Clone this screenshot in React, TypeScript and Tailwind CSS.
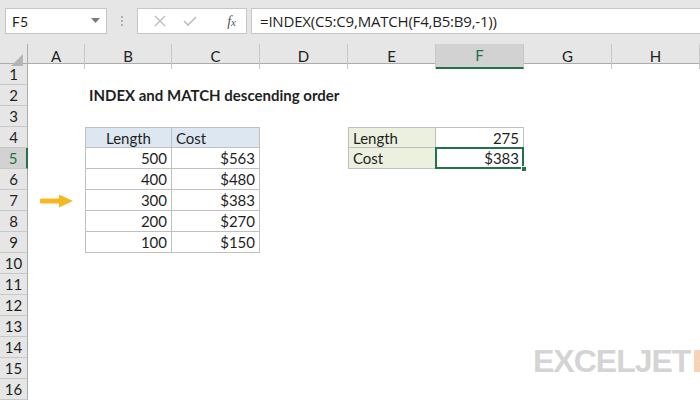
import React from 'react';

const COLS = ['A', 'B', 'C', 'D', 'E', 'F', 'G', 'H'];
const ROWS = Array.from({ length: 16 }, (_, i) => i + 1);

const tableData: [number, string][] = [
  [500, '$563'],
  [400, '$480'],
  [300, '$383'],
  [200, '$270'],
  [100, '$150'],
];

const grid = 'grid grid-cols-[28px_57px_87px_88px_88px_88px_88px_88px_88px]';

function Cell({ row, col }: { row: number; col: string }) {
  const base = 'h-[21px] text-[15px] leading-[20px] px-[4px] whitespace-nowrap overflow-visible relative';

  // Title
  if (row === 2 && col === 'B') {
    return <div className={`${base} font-bold`}>INDEX and MATCH descending order</div>;
  }
  // Arrow in A7
  if (row === 7 && col === 'A') {
    return (
      <div className={`${base} flex items-center`}>
        <svg width="34" height="14" viewBox="0 0 34 14" className="ml-[8px]">
          <path d="M2 7 H20" stroke="#f5b823" strokeWidth="5" strokeLinecap="round" />
          <path d="M19 0.5 L33 7 L19 13.5 Z" fill="#f5b823" />
        </svg>
      </div>
    );
  }
  // Main table B4:C9
  if (row >= 4 && row <= 9 && (col === 'B' || col === 'C')) {
    const left = col === 'B' ? 'border-l' : '';
    const top = row === 4 ? 'border-t' : '';
    const border = `border-[#c0c0c0] border-r border-b ${left} ${top}`;
    if (row === 4) {
      return (
        <div className={`${base} ${border} bg-[#dde7f2] ${col === 'B' ? 'text-center' : 'text-left'}`}>
          {col === 'B' ? 'Length' : 'Cost'}
        </div>
      );
    }
    const [len, cost] = tableData[row - 5];
    return <div className={`${base} ${border} text-right`}>{col === 'B' ? len : cost}</div>;
  }
  // Lookup table E4:F5
  if ((row === 4 || row === 5) && (col === 'E' || col === 'F')) {
    const left = col === 'E' ? 'border-l' : '';
    const top = row === 4 ? 'border-t' : '';
    const border = `border-[#c0c0c0] border-r border-b ${left} ${top}`;
    if (col === 'E') {
      return <div className={`${base} ${border} bg-[#ebf1de]`}>{row === 4 ? 'Length' : 'Cost'}</div>;
    }
    if (row === 4) {
      return <div className={`${base} ${border} text-right`}>275</div>;
    }
    return (
      <div className={`${base} ${border} text-right`}>
        <div className="absolute inset-[-1px] border-2 border-[#217346] pointer-events-none" />
        <div className="absolute right-[-4px] bottom-[-4px] w-[6px] h-[6px] bg-[#217346] border border-white" />
        $383
      </div>
    );
  }
  return <div className={base} />;
}

export default function App() {
  return (
    <div className="w-[700px] h-[400px] overflow-hidden bg-white text-[#1f1f1f] font-['Lato','Open_Sans',sans-serif]">
      {/* Formula bar */}
      <div className="h-[44px] bg-[#e6e6e6] flex items-start pt-[8px] pl-[5px]">
        <div className="w-[102px] h-[26px] bg-white border border-[#c6c6c6] flex items-center justify-between pl-[6px] pr-[6px] text-[14px]">
          <span>F5</span>
          <svg width="9" height="6" viewBox="0 0 9 6">
            <path d="M0 0 H9 L4.5 5 Z" fill="#7a7a7a" />
          </svg>
        </div>
        <div className="w-[30px] h-[26px] flex flex-col items-center justify-center gap-[2px]">
          <span className="w-[2px] h-[2px] bg-[#b0b0b0]" />
          <span className="w-[2px] h-[2px] bg-[#b0b0b0]" />
          <span className="w-[2px] h-[2px] bg-[#b0b0b0]" />
        </div>
        <div className="w-[110px] h-[26px] bg-white border border-[#c6c6c6] flex items-center pl-[16px] pr-[10px]">
          <svg width="12" height="12" viewBox="0 0 12 12">
            <path d="M1 1 L11 11 M11 1 L1 11" stroke="#bdbdbd" strokeWidth="1.4" />
          </svg>
          <svg width="14" height="12" viewBox="0 0 14 12" className="ml-[17px]">
            <path d="M1 6 L5 10 L13 2" stroke="#bdbdbd" strokeWidth="1.6" fill="none" />
          </svg>
          <span className="ml-auto italic font-['Liberation_Serif',serif] text-[14px] text-[#555]">
            f<span className="text-[11px]">x</span>
          </span>
        </div>
        <div className="flex-1 h-[26px] bg-white border border-[#c6c6c6] border-r-0 ml-[4px] flex items-center pl-[8px] text-[15px] font-['Open_Sans','Lato',sans-serif] tracking-[-0.2px]">
          =INDEX(C5:C9,MATCH(F4,B5:B9,-1))
        </div>
      </div>

      {/* Column headers */}
      <div className={`${grid} h-[20px] bg-[#e6e6e6] border-b border-[#ababab]`}>
        <div className="relative border-r border-[#ababab]">
          <svg width="12" height="12" viewBox="0 0 12 12" className="absolute right-[4px] bottom-[3px]">
            <path d="M12 0 V12 H0 Z" fill="#b4b4b4" />
          </svg>
        </div>
        {COLS.map((c) => (
          <div
            key={c}
            className={`flex items-center justify-center text-[15px] border-r border-[#c8c8c8] ${
              c === 'F' ? 'bg-[#d2d2d2] text-[#217346] border-b-2 border-b-[#217346]' : 'text-[#222]'
            }`}
          >
            {c}
          </div>
        ))}
      </div>

      {/* Rows */}
      {ROWS.map((r) => (
        <div key={r} className={grid}>
          <div
            className={`h-[21px] flex items-center justify-center text-[15px] border-b border-[#c8c8c8] ${
              r === 5
                ? 'bg-[#d2d2d2] text-[#217346] border-r-2 border-r-[#217346]'
                : 'bg-[#e6e6e6] border-r border-r-[#ababab]'
            }`}
          >
            {r}
          </div>
          {COLS.map((c) => (
            <Cell key={c} row={r} col={c} />
          ))}
        </div>
      ))}

      {/* Logo */}
      <div className="absolute left-[533px] top-[345px] flex items-center gap-[4px]">
        <span className="text-[32px] leading-none font-black tracking-[-1px] text-[#d4d4d4] font-['Liberation_Sans',sans-serif] italic-none">
          EXCELJET
        </span>
        <svg width="22" height="22" viewBox="0 0 22 22">
          <rect width="22" height="22" fill="#f7d2b4" />
          <path d="M17 4 L5 12 L12 12 L12 19 Z" fill="#ffffff" />
        </svg>
      </div>
    </div>
  );
}
